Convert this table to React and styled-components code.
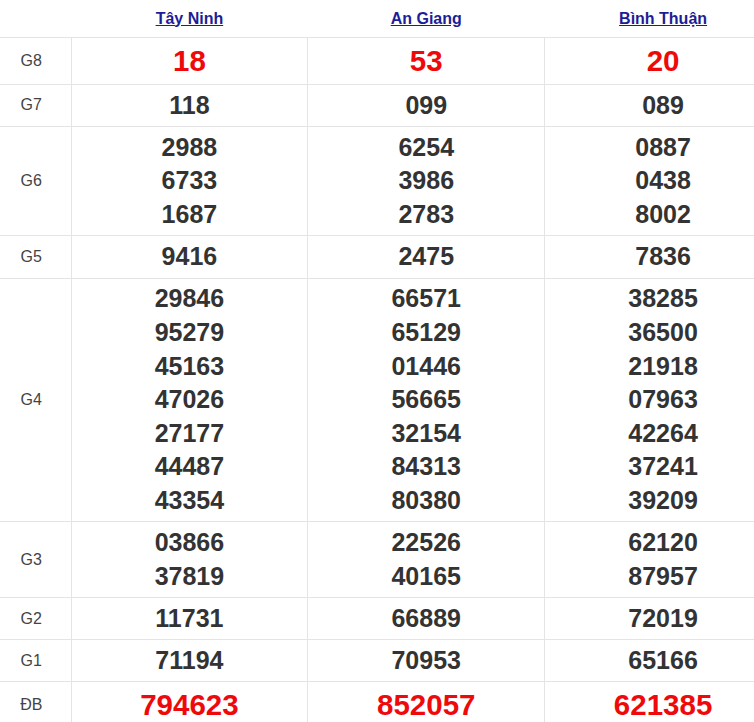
import styled, { createGlobalStyle } from 'styled-components';

const GlobalStyle = createGlobalStyle`
  html, body {
    margin: 0;
    padding: 0;
    background: #ffffff;
    overflow: hidden;
  }
  body {
    font-family: "Liberation Sans", Arial, sans-serif;
  }
`;

const ResultTable = styled.table`
  width: 782px;
  table-layout: fixed;
  border-collapse: collapse;
  font-family: "Liberation Sans", Arial, sans-serif;
`;

const LabelCol = styled.col`
  width: 71px;
`;

const HeadCell = styled.th`
  height: 37px;
  padding: 0;
  border-bottom: 1px solid #e4e4e4;
  text-align: center;
  vertical-align: middle;
`;

const ProvinceLink = styled.a`
  font-size: 16px;
  font-weight: bold;
  color: #1d1d96;
  text-decoration: underline;
`;

const LabelCell = styled.td`
  padding: 0 8px 0 0;
  border-bottom: 1px solid #e4e4e4;
  border-right: 1px solid #e4e4e4;
  text-align: center;
  vertical-align: middle;
  font-size: 16px;
  color: #444444;
`;

const NumberCell = styled.td`
  padding: 3.8px 0;
  border: 1px solid #e4e4e4;
  border-top: 0;
  text-align: center;
  vertical-align: middle;
`;

const Number = styled.div`
  font-weight: bold;
  font-size: ${props => (props.$big ? '29.5px' : '25px')};
  line-height: ${props => (props.$big ? '38.2px' : '33.6px')};
  color: ${props => (props.$big ? '#ee0a0a' : '#333333')};
`;

const provinces = ['Tây Ninh', 'An Giang', 'Bình Thuận'];

const prizes = [
  { label: 'G8', big: true, values: [['18'], ['53'], ['20']] },
  { label: 'G7', values: [['118'], ['099'], ['089']] },
  {
    label: 'G6',
    values: [
      ['2988', '6733', '1687'],
      ['6254', '3986', '2783'],
      ['0887', '0438', '8002'],
    ],
  },
  { label: 'G5', values: [['9416'], ['2475'], ['7836']] },
  {
    label: 'G4',
    values: [
      ['29846', '95279', '45163', '47026', '27177', '44487', '43354'],
      ['66571', '65129', '01446', '56665', '32154', '84313', '80380'],
      ['38285', '36500', '21918', '07963', '42264', '37241', '39209'],
    ],
  },
  {
    label: 'G3',
    values: [
      ['03866', '37819'],
      ['22526', '40165'],
      ['62120', '87957'],
    ],
  },
  { label: 'G2', values: [['11731'], ['66889'], ['72019']] },
  { label: 'G1', values: [['71194'], ['70953'], ['65166']] },
  { label: 'ĐB', big: true, values: [['794623'], ['852057'], ['621385']] },
];

export default function App() {
  return (
    <>
      <GlobalStyle />
      <ResultTable>
        <colgroup>
          <LabelCol />
          <col />
          <col />
          <col />
        </colgroup>
        <thead>
          <tr>
            <HeadCell />
            {provinces.map(name => (
              <HeadCell key={name}>
                <ProvinceLink href="#">{name}</ProvinceLink>
              </HeadCell>
            ))}
          </tr>
        </thead>
        <tbody>
          {prizes.map(prize => (
            <tr key={prize.label}>
              <LabelCell>{prize.label}</LabelCell>
              {prize.values.map((list, i) => (
                <NumberCell key={i}>
                  {list.map(num => (
                    <Number key={num} $big={prize.big}>
                      {num}
                    </Number>
                  ))}
                </NumberCell>
              ))}
            </tr>
          ))}
        </tbody>
      </ResultTable>
    </>
  );
}
